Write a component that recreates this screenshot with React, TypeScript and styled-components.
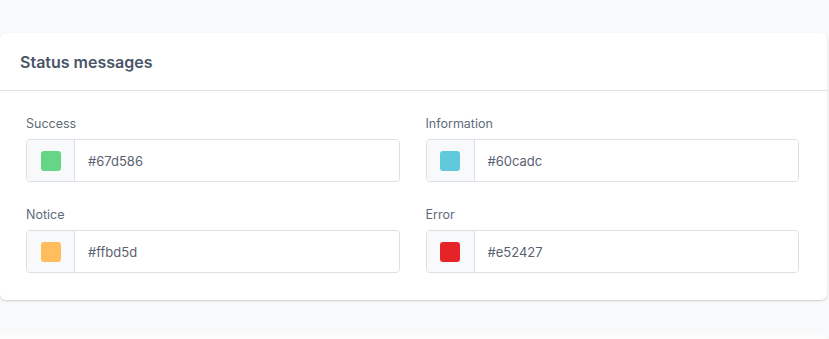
import React from 'react';
import styled, { createGlobalStyle } from 'styled-components';

const GlobalStyle = createGlobalStyle`
  html, body {
    margin: 0;
    padding: 0;
    background: #f8f9fa;
    font-family: Inter, 'Noto Sans', sans-serif;
    color: #4a5568;
    overflow: hidden;
  }
`;

const Page = styled.div`
  padding-top: 33px;
  padding-right: 2px;
  height: 339px;
  box-sizing: border-box;
`;

const Card = styled.section`
  background: #ffffff;
  border-radius: 6px;
  box-shadow: 0 1px 2px rgba(0, 0, 0, 0.18);
  margin-bottom: 33px;
`;

const CardHeader = styled.header`
  height: 57px;
  display: flex;
  align-items: center;
  padding: 0 20px;
  border-bottom: 1px solid #dee2e6;
  font-size: 16px;
  font-weight: 600;
  color: #4a5568;
`;

const CardBody = styled.div`
  display: grid;
  grid-template-columns: 1fr 1fr;
  column-gap: 26px;
  row-gap: 23px;
  padding: 23px 28px 27px 26px;
`;

const Field = styled.div`
  display: flex;
  flex-direction: column;
`;

const Label = styled.label`
  font-size: 12.5px;
  line-height: 20px;
  margin-bottom: 5px;
  color: #5f6b7a;
`;

const InputGroup = styled.div`
  display: flex;
  height: 43px;
  box-sizing: border-box;
  border: 1px solid #dcdfe3;
  border-radius: 4px;
  overflow: hidden;
`;

const Addon = styled.div`
  width: 47px;
  flex-shrink: 0;
  display: flex;
  align-items: center;
  justify-content: center;
  background: #f8f9fa;
  border-right: 1px solid #dcdfe3;
`;

const Swatch = styled.span<{ $color: string }>`
  width: 20px;
  height: 20px;
  border-radius: 3px;
  background: ${p => p.$color};
`;

const Value = styled.input`
  flex: 1;
  min-width: 0;
  border: none;
  outline: none;
  padding: 0 13px;
  font-family: Inter, 'Noto Sans', sans-serif;
  font-size: 13px;
  color: #5a6270;
  background: #ffffff;
`;

const NextCard = styled.div`
  height: 6px;
  background: #ffffff;
  border-radius: 6px 6px 0 0;
  opacity: 0.5;
`;

const colors = [
  { name: 'Success', value: '#67d586' },
  { name: 'Information', value: '#60cadc' },
  { name: 'Notice', value: '#ffbd5d' },
  { name: 'Error', value: '#e52427' },
];

const App: React.FC = () => (
  <>
    <GlobalStyle />
    <Page>
      <Card>
        <CardHeader>Status messages</CardHeader>
        <CardBody>
          {colors.map(c => (
            <Field key={c.name}>
              <Label>{c.name}</Label>
              <InputGroup>
                <Addon><Swatch $color={c.value} /></Addon>
                <Value defaultValue={c.value} />
              </InputGroup>
            </Field>
          ))}
        </CardBody>
      </Card>
      <NextCard />
    </Page>
  </>
);

export default App;
